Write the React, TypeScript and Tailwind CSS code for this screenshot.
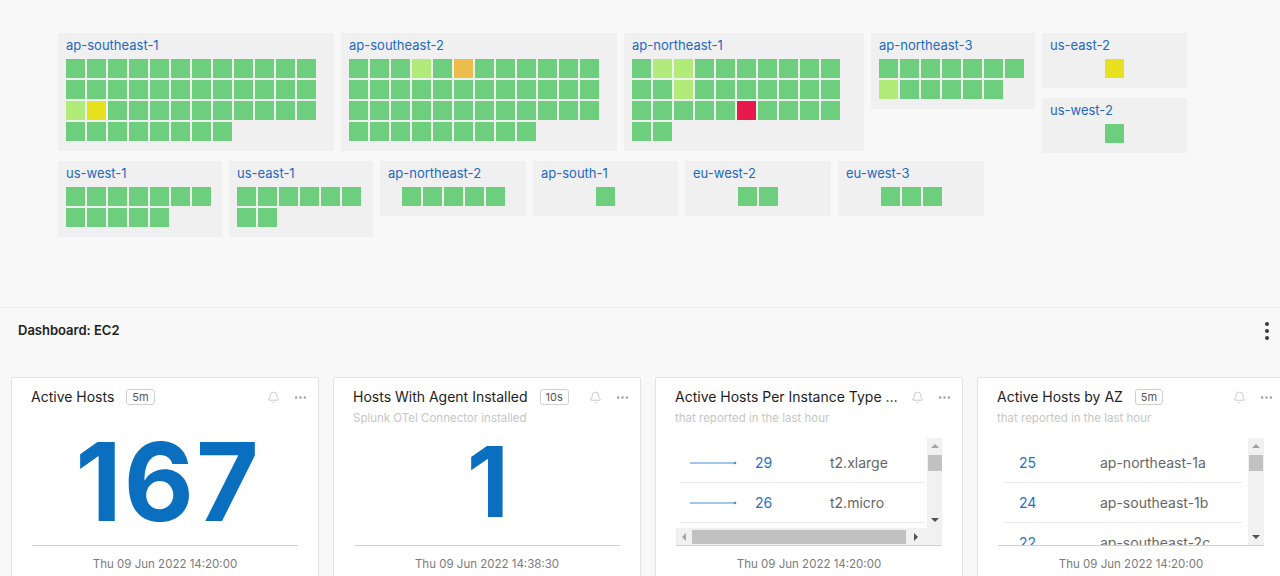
import { Bell, Ellipsis } from 'lucide-react';

type C = 'G' | 'L' | 'Y' | 'O' | 'R';
const CLS: Record<C, string> = {
  G: 'bg-[#6dcf7d]',
  L: 'bg-[#b1eb79]',
  Y: 'bg-[#e7e21d]',
  O: 'bg-[#ebbe4b]',
  R: 'bg-[#e81a4c]',
};

function cells(n: number, over: Record<number, C> = {}): C[] {
  return Array.from({ length: n }, (_, i) => over[i] ?? 'G');
}

type Reg = { name: string; w: string; gw?: string; cells: C[]; center?: boolean };

const row1: Reg[] = [
  { name: 'ap-southeast-1', w: 'w-[276px]', gw: 'w-[251px]', cells: cells(44, { 24: 'L', 25: 'Y' }) },
  { name: 'ap-southeast-2', w: 'w-[276px]', gw: 'w-[251px]', cells: cells(45, { 3: 'L', 5: 'O' }) },
  { name: 'ap-northeast-1', w: 'w-[240px]', gw: 'w-[209px]', cells: cells(32, { 1: 'L', 2: 'L', 12: 'L', 25: 'R' }) },
  { name: 'ap-northeast-3', w: 'w-[164px]', gw: 'w-[146px]', cells: cells(13, { 7: 'L' }) },
];
const col: Reg[] = [
  { name: 'us-east-2', w: 'w-[145px]', cells: ['Y'], center: true },
  { name: 'us-west-2', w: 'w-[145px]', cells: ['G'], center: true },
];
const row2: Reg[] = [
  { name: 'us-west-1', w: 'w-[164px]', gw: 'w-[146px]', cells: cells(12) },
  { name: 'us-east-1', w: 'w-[144px]', gw: 'w-[125px]', cells: cells(8) },
  { name: 'ap-northeast-2', w: 'w-[146px]', cells: cells(5), center: true },
  { name: 'ap-south-1', w: 'w-[145px]', cells: cells(1), center: true },
  { name: 'eu-west-2', w: 'w-[146px]', cells: cells(2), center: true },
  { name: 'eu-west-3', w: 'w-[146px]', cells: cells(3), center: true },
];

function Region({ r }: { r: Reg }) {
  return (
    <div className={`${r.w} shrink-0 bg-[#f0f0f0] pt-[4px] pb-[10px] px-[8px]`}>
      <div className="text-[13px] leading-[17px] text-[#2468c2] mb-[5px] whitespace-nowrap">{r.name}</div>
      <div className={`flex flex-wrap gap-[2px] ${r.center ? 'justify-center' : r.gw ?? ''}`}>
        {r.cells.map((c, i) => (
          <div key={i} className={`w-[19px] h-[19px] ${CLS[c]}`} />
        ))}
      </div>
    </div>
  );
}

function Header({ title, badge }: { title: string; badge?: string }) {
  return (
    <div className="flex items-center h-[18px] mt-[10px] pl-[19px] pr-[10px]">
      <div className="text-[14px] leading-[18px] text-[#1d1d1d] whitespace-nowrap">{title}</div>
      {badge && (
        <div className="ml-[12px] h-[16px] px-[5px] border border-[#cfcfcf] rounded-[3px] text-[11px] leading-[14px] text-[#555] flex items-center">
          {badge}
        </div>
      )}
      <div className="ml-auto flex items-center gap-[13px]">
        <Bell size={13} strokeWidth={1.4} className="text-[#b9b9b9]" />
        <Ellipsis size={15} strokeWidth={2} className="text-[#a0a0a0]" />
      </div>
    </div>
  );
}

function Card({
  title,
  badge,
  sub,
  date,
  children,
}: {
  title: string;
  badge?: string;
  sub?: string;
  date: string;
  children: React.ReactNode;
}) {
  return (
    <div className="w-[308px] shrink-0 h-[230px] bg-white border border-[#e3e3e3] rounded-[2px]">
      <Header title={title} badge={badge} />
      <div className="h-[20px] pt-[4px] pl-[19px] text-[11.5px] leading-[16px] text-[#c6c6c6] whitespace-nowrap">{sub}</div>
      <div className="h-[119px]">{children}</div>
      <div className="mx-[20px] h-px bg-[#cfcfcf]" />
      <div className="mt-[10px] text-center text-[11.5px] leading-[16px] text-[#7b7b7b]">{date}</div>
    </div>
  );
}

function Spark() {
  return (
    <svg width="47" height="6" viewBox="0 0 47 6">
      <line x1="0" y1="3" x2="45" y2="3" stroke="#4a8fd3" strokeWidth="1.2" />
      <circle cx="45" cy="3" r="1.3" fill="#4a8fd3" />
    </svg>
  );
}

function UpTri() {
  return <div className="w-0 h-0 border-x-[4px] border-x-transparent border-b-[4px] border-b-[#a3a3a3]" />;
}
function DownTri() {
  return <div className="w-0 h-0 border-x-[4px] border-x-transparent border-t-[4px] border-t-[#505050]" />;
}

function VScroll({ w }: { w: string }) {
  return (
    <div className={`${w} shrink-0 bg-[#f1f1f1] flex flex-col items-center`}>
      <div className="h-[16px] flex items-center justify-center">
        <UpTri />
      </div>
      <div className="w-[14px] h-[16px] bg-[#c1c1c1] mt-[1px]" />
      <div className="flex-1" />
      <div className="h-[16px] flex items-center justify-center">
        <DownTri />
      </div>
    </div>
  );
}

export default function App() {
  return (
    <div className="w-[1280px] h-[576px] overflow-hidden bg-[#f8f8f8] font-[Inter,sans-serif]">
      <div className="h-[308px] border-b border-[#ececec] pt-[33px] pl-[58px] flex flex-col gap-[8px]">
        <div className="flex items-start gap-[7px]">
          {row1.map((r) => (
            <Region key={r.name} r={r} />
          ))}
          <div className="flex flex-col gap-[10px]">
            {col.map((r) => (
              <Region key={r.name} r={r} />
            ))}
          </div>
        </div>
        <div className="flex items-start gap-[7px]">
          {row2.map((r) => (
            <Region key={r.name} r={r} />
          ))}
        </div>
      </div>

      <div className="h-[46px] flex items-center justify-between pl-[18px] pr-[11px]">
        <div className="text-[13px] font-semibold text-[#222]">Dashboard: EC2</div>
        <div className="flex flex-col gap-[3px]">
          <div className="w-[4px] h-[4px] rounded-full bg-[#3a3a3a]" />
          <div className="w-[4px] h-[4px] rounded-full bg-[#3a3a3a]" />
          <div className="w-[4px] h-[4px] rounded-full bg-[#3a3a3a]" />
        </div>
      </div>

      <div className="pt-[23px] pl-[11px] flex gap-[14px]">
        <Card title="Active Hosts" badge="5m" date="Thu 09 Jun 2022 14:20:00">
          <div className="h-full flex items-center justify-center pb-[7px] pl-[6px]">
            <div className="text-[108px] leading-none font-bold text-[#0b6fc0] tracking-[2px]">167</div>
          </div>
        </Card>
        <Card title="Hosts With Agent Installed" badge="10s" sub="Splunk OTel Connector installed" date="Thu 09 Jun 2022 14:38:30">
          <div className="h-full flex items-center justify-center pb-[7px] pl-[2px]">
            <div className="text-[98px] leading-none font-bold text-[#0b6fc0]">1</div>
          </div>
        </Card>
        <Card title="Active Hosts Per Instance Type …" sub="that reported in the last hour" date="Thu 09 Jun 2022 14:20:00">
          <div className="pt-[12px] px-[20px]">
            <div className="h-[107px] flex flex-col">
              <div className="h-[90px] flex">
                <div className="flex-1 overflow-hidden pt-[5px] px-[3px]">
                  {[
                    ['29', 't2.xlarge'],
                    ['26', 't2.micro'],
                  ].map(([n, t]) => (
                    <div key={t} className="h-[40px] flex items-center border-b border-[#ececec] pl-[11px] text-[14px]">
                      <div className="w-[65px] shrink-0 flex items-center">
                        <Spark />
                      </div>
                      <div className="w-[75px] shrink-0 text-[#2473c1]">{n}</div>
                      <div className="text-[#666]">{t}</div>
                    </div>
                  ))}
                </div>
                <VScroll w="w-[15px]" />
              </div>
              <div className="h-[17px] bg-[#f1f1f1] flex items-center">
                <div className="w-[16px] flex justify-center">
                  <div className="w-0 h-0 border-y-[4px] border-y-transparent border-r-[4px] border-r-[#a3a3a3]" />
                </div>
                <div className="w-[214px] h-[14px] bg-[#c1c1c1]" />
                <div className="w-[20px] flex justify-center">
                  <div className="w-0 h-0 border-y-[4px] border-y-transparent border-l-[4px] border-l-[#505050]" />
                </div>
              </div>
            </div>
          </div>
        </Card>
        <Card title="Active Hosts by AZ" badge="5m" sub="that reported in the last hour" date="Thu 09 Jun 2022 14:20:00">
          <div className="pt-[12px] px-[20px]">
            <div className="h-[107px] flex">
              <div className="flex-1 overflow-hidden pt-[5px] px-[5px]">
                {[
                  ['25', 'ap-northeast-1a'],
                  ['24', 'ap-southeast-1b'],
                  ['22', 'ap-southeast-2c'],
                ].map(([n, t]) => (
                  <div key={t} className="h-[40px] flex items-center border-b border-[#ececec] pl-[16px] text-[14px]">
                    <div className="w-[81px] shrink-0 text-[#2473c1]">{n}</div>
                    <div className="text-[#666]">{t}</div>
                  </div>
                ))}
              </div>
              <VScroll w="w-[16px]" />
            </div>
          </div>
        </Card>
      </div>
    </div>
  );
}
